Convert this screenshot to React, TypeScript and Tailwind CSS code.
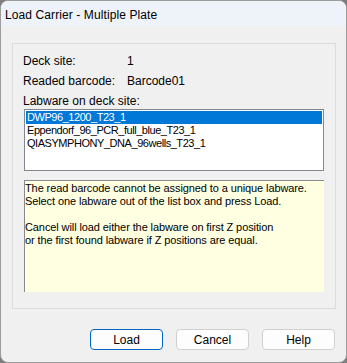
export default function App() {
  const labware = ['DWP96_1200_T23_1', 'Eppendorf_96_PCR_full_blue_T23_1', 'QIASYMPHONY_DNA_96wells_T23_1'];

  return (
    <div className="w-[347px] h-[363px] bg-[#7d7d7d] font-['Liberation_Sans',Arial,sans-serif] text-black">
      <div className="h-full rounded-[8px] border border-[#9c9c9c] overflow-hidden flex flex-col bg-[#f0f0f0]">
        {/* Title bar */}
        <div className="h-[25px] bg-[#eef3f9] flex items-center pl-[4px] pt-[2px] text-[12px] tracking-[0.1px]">
          Load Carrier - Multiple Plate
        </div>

        <div className="pl-[11px] pr-[10px] pt-[17px]">
          {/* Group box */}
          <div className="h-[266px] border border-[#dcdcdc] pl-[10px] pr-[10px] pt-[9px]">
            <div className="flex h-[16px] items-center text-[12px] leading-[16px]">
              <span className="w-[104px]">Deck site:</span>
              <span>1</span>
            </div>
            <div className="flex h-[16px] mt-[4px] items-center text-[12px] leading-[16px]">
              <span className="w-[104px]">Readed barcode:</span>
              <span>Barcode01</span>
            </div>
            <div className="h-[16px] mt-[4px] text-[12px] leading-[16px]">Labware on deck site:</div>

            {/* List box */}
            <div className="ml-[1px] w-[300px] h-[62px] border border-[#828790] bg-white p-[1px] text-[11px] tracking-[-0.45px]">
              {labware.map((item, i) => (
                <div
                  key={item}
                  className={
                    i === 0
                      ? 'h-[13px] leading-[13px] pl-[1px] bg-[#0078d7] text-white'
                      : 'h-[13px] leading-[13px] pl-[1px]'
                  }
                >
                  {item}
                </div>
              ))}
            </div>

            {/* Info text */}
            <div className="ml-[1px] mt-[9px] w-[300px] h-[112px] border-l border-t border-[#8a8a8a] bg-[#ffffe1] pt-[1px] text-[11px] leading-[13px] tracking-[-0.1px]">
              <div>The read barcode cannot be assigned to a unique labware.</div>
              <div>Select one labware out of the list box and press Load.</div>
              <div className="h-[13px]" />
              <div>Cancel will load either the labware on first Z position</div>
              <div>or the first found labware if Z positions are equal.</div>
            </div>
          </div>

          {/* Buttons */}
          <div className="flex justify-end gap-[13px] mt-[20px] pr-[1px] text-[12px]">
            <button className="w-[73px] h-[21px] rounded-[4px] border-[1.5px] border-[#0067c0] bg-[#fdfdfd] flex items-center justify-center">
              Load
            </button>
            <button className="w-[73px] h-[21px] rounded-[4px] border border-[#d0d0d0] bg-[#fdfdfd] flex items-center justify-center">
              Cancel
            </button>
            <button className="w-[73px] h-[21px] rounded-[4px] border border-[#d0d0d0] bg-[#fdfdfd] flex items-center justify-center">
              Help
            </button>
          </div>
        </div>
      </div>
    </div>
  );
}
